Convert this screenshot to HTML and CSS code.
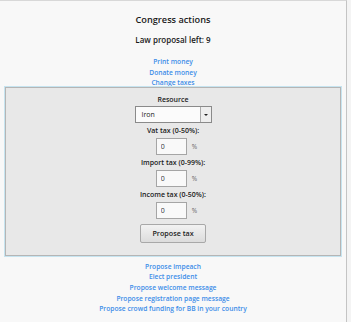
FILE: index.html
```html
<!DOCTYPE html>
<html lang="en">

<head>
    <meta charset="UTF-8">
    <meta name="viewport" content="width=device-width, initial-scale=1.0">
    <title>Congress actions</title>
    <link rel="stylesheet" href="styles.css">
</head>

<body>
    <div class="page">
        <h1>Congress actions</h1>
        <h2>Law proposal left: 9</h2>
        <div class="links">
            <a href="#">Print money</a>
            <a href="#">Donate money</a>
            <a href="#">Change taxes</a>
        </div>
        <div class="tax-panel">
            <form class="tax-form">
                <label class="field-label">Resource</label>
                <div class="select-box">
                    <span>Iron</span>
                    <span class="select-arrow"></span>
                </div>
                <label class="field-label">Vat tax (0-50%):</label>
                <div class="field-row">
                    <input type="text" value="0">
                    <span class="percent">%</span>
                </div>
                <label class="field-label">Import tax (0-99%):</label>
                <div class="field-row">
                    <input type="text" value="0">
                    <span class="percent">%</span>
                </div>
                <label class="field-label">Income tax (0-50%):</label>
                <div class="field-row">
                    <input type="text" value="0">
                    <span class="percent">%</span>
                </div>
                <button type="button">Propose tax</button>
            </form>
        </div>
        <div class="links bottom-links">
            <a href="#">Propose impeach</a>
            <a href="#">Elect president</a>
            <a href="#">Propose welcome message</a>
            <a href="#">Propose registration page message</a>
            <a href="#">Propose crowd funding for BB in your country</a>
        </div>
    </div>
</body>

</html>
```

FILE: styles.css
```css
body {
    margin: 0;
    padding: 0;
    background-color: #f4f4f4;
    font-family: "Open Sans", "DejaVu Sans", sans-serif;
    color: #222;
}

.page {
    width: 347px;
    height: 322px;
    box-sizing: border-box;
    border-top: 1px solid #d8d8d8;
    border-right: 1px solid #c4c4c4;
    background-color: #f8f8f8;
    display: flex;
    flex-direction: column;
    align-items: center;
}

h1 {
    margin: 12px 0 0;
    font-size: 9.2px;
    font-weight: 600;
    line-height: 14px;
    color: #1a1a1a;
}

h2 {
    margin: 7px 0 0;
    font-size: 8px;
    font-weight: 600;
    line-height: 12px;
    color: #1a1a1a;
}

.links {
    margin-top: 11px;
    display: flex;
    flex-direction: column;
    align-items: center;
}

.links a {
    font-size: 6.7px;
    font-weight: 600;
    line-height: 10.6px;
    color: #3d8de8;
    text-decoration: none;
}

.tax-panel {
    align-self: stretch;
    margin: -2px 5px 0;
    border: 1px solid #b5b5b5;
    box-shadow: 0 0 0 1px #c6e4f0;
    background-color: #e8e8e8;
    padding: 4px 0 12px;
}

.tax-form {
    display: flex;
    flex-direction: column;
    align-items: center;
}

.field-label {
    font-size: 7px;
    font-weight: 600;
    line-height: 11px;
    margin-top: 2px;
    color: #1a1a1a;
}

.select-box {
    width: 77px;
    height: 17px;
    box-sizing: border-box;
    margin-top: 1px;
    border: 1px solid #8a8a8a;
    background-color: #fbfbfb;
    display: flex;
    align-items: center;
    justify-content: space-between;
    font-size: 7px;
    padding-left: 6px;
}

.select-arrow {
    width: 10px;
    height: 15px;
    border-left: 1px solid #aaa;
    background-color: #eee;
    position: relative;
}

.select-arrow::after {
    content: "";
    position: absolute;
    left: 3px;
    top: 7px;
    border-left: 2px solid transparent;
    border-right: 2px solid transparent;
    border-top: 2px solid #222;
}

.field-row {
    display: flex;
    align-items: center;
    margin: 2px 0 0 7px;
}

.field-row input {
    width: 31px;
    height: 17px;
    box-sizing: border-box;
    border: 1px solid #a5a5a5;
    background-color: #f9f9f9;
    font-family: inherit;
    font-size: 7px;
    color: #333;
    padding: 0 0 0 4px;
    outline: none;
}

.percent {
    margin-left: 5px;
    font-size: 6.5px;
    color: #666;
}

button {
    margin-top: 5px;
    width: 66px;
    height: 19px;
    border: 1px solid #a8a8a8;
    border-radius: 2px;
    background: linear-gradient(#f2f2f2, #dcdcdc);
    font-family: inherit;
    font-size: 7.2px;
    font-weight: 600;
    color: #222;
    padding: 0;
}

.bottom-links {
    margin-top: 6px;
}
```
